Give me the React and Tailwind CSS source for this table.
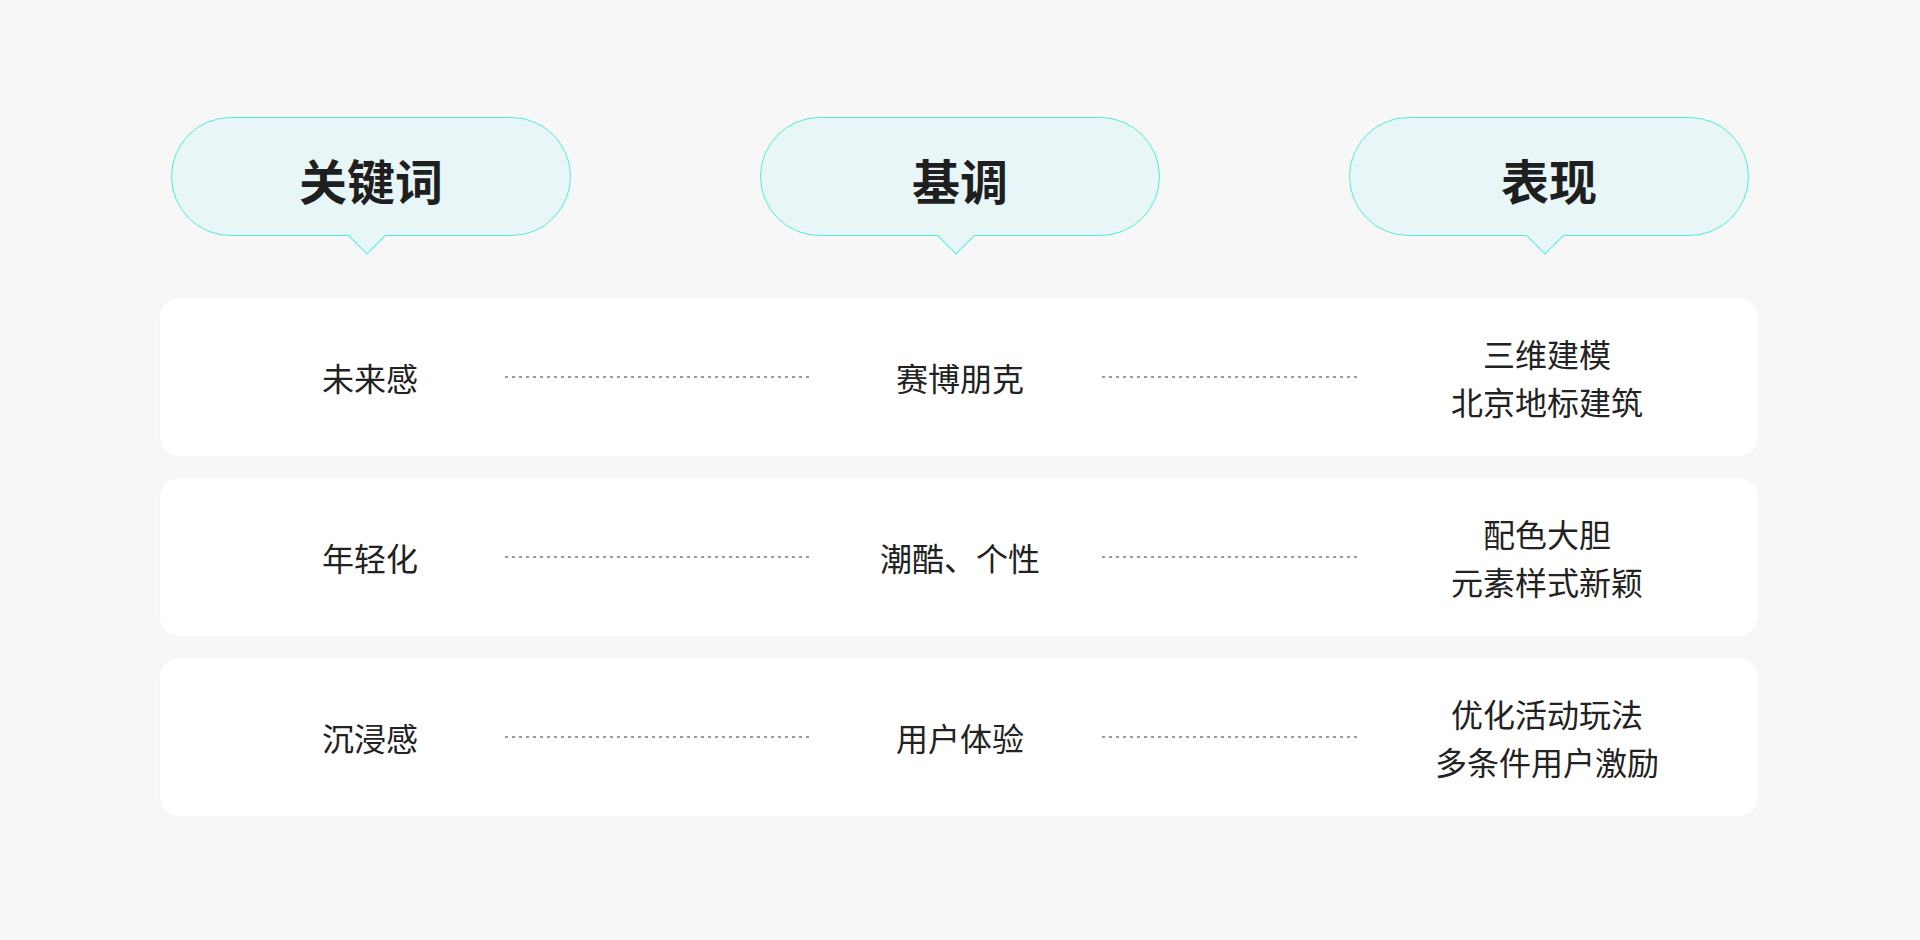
import React from "react";

const font = { fontFamily: '"Noto Sans CJK SC", "Noto Sans", sans-serif' };

function Pill({ label, className }) {
  return (
    <div
      className={
        "relative w-[400px] h-[119px] rounded-full border border-[#4cf0d4] bg-[#e8f6f7] flex items-center justify-center " +
        className
      }
    >
      <span className="text-[48px] font-bold text-[#1f1f1f] leading-none mt-[4px]">
        {label}
      </span>
      <div className="absolute left-[calc(50%-4px)] bottom-[-14px] w-[27px] h-[27px] -translate-x-1/2 rotate-45 bg-[#e8f6f7] border-r border-b border-[#3ff0e6]"></div>
    </div>
  );
}

function Dots({ className }) {
  return (
    <div
      className={
        "h-[2px] bg-[repeating-linear-gradient(to_right,#9a9a9a_0_3px,transparent_3px_7px)] " +
        className
      }
    ></div>
  );
}

function Row({ a, b, c }) {
  return (
    <div className="h-[160px] rounded-[20px] bg-white border border-[#f1f7f5] flex items-center pl-[80px] text-[32px] leading-[48px] text-[#222]">
      <div className="w-[260px] text-center">{a}</div>
      <Dots className="ml-[5px] w-[304px]" />
      <div className="ml-[11px] w-[280px] text-center">{b}</div>
      <Dots className="ml-[2px] w-[256px]" />
      <div className="w-[378px] text-center">
        {c.map((t) => (
          <div key={t}>{t}</div>
        ))}
      </div>
    </div>
  );
}

export default function App() {
  return (
    <div className="w-full h-[940px] bg-[#f7f7f7] pt-[117px]" style={font}>
      <div className="w-[1600px] ml-[159px]">
        <div className="flex items-start pl-[12px]">
          <Pill label="关键词" className="" />
          <Pill label="基调" className="ml-[189px]" />
          <Pill label="表现" className="ml-[189px]" />
        </div>
        <div className="mt-[61px] flex flex-col gap-[20px]">
          <Row a="未来感" b="赛博朋克" c={["三维建模", "北京地标建筑"]} />
          <Row a="年轻化" b="潮酷、个性" c={["配色大胆", "元素样式新颖"]} />
          <Row a="沉浸感" b="用户体验" c={["优化活动玩法", "多条件用户激励"]} />
        </div>
      </div>
    </div>
  );
}
